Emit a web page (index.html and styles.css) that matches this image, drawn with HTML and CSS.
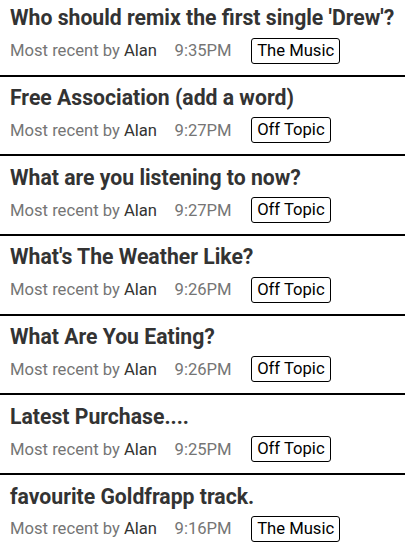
FILE: index.html
```html
<!DOCTYPE html>
<html lang="en">
<head>
    <meta charset="UTF-8">
    <meta name="viewport" content="width=device-width, initial-scale=1.0">
    <title>Discussions</title>
    <link rel="stylesheet" href="styles.css">
</head>
<body>
    <div class="thread">
        <div class="title">Who should remix the first single 'Drew'?</div>
        <div class="meta">
            <span class="recent">Most recent by <span class="who">Alan</span></span>
            <span class="time">9:35PM</span>
            <span class="tag">The Music</span>
        </div>
    </div>
    <div class="thread">
        <div class="title">Free Association (add a word)</div>
        <div class="meta">
            <span class="recent">Most recent by <span class="who">Alan</span></span>
            <span class="time">9:27PM</span>
            <span class="tag">Off Topic</span>
        </div>
    </div>
    <div class="thread">
        <div class="title">What are you listening to now?</div>
        <div class="meta">
            <span class="recent">Most recent by <span class="who">Alan</span></span>
            <span class="time">9:27PM</span>
            <span class="tag">Off Topic</span>
        </div>
    </div>
    <div class="thread">
        <div class="title">What's The Weather Like?</div>
        <div class="meta">
            <span class="recent">Most recent by <span class="who">Alan</span></span>
            <span class="time">9:26PM</span>
            <span class="tag">Off Topic</span>
        </div>
    </div>
    <div class="thread">
        <div class="title">What Are You Eating?</div>
        <div class="meta">
            <span class="recent">Most recent by <span class="who">Alan</span></span>
            <span class="time">9:26PM</span>
            <span class="tag">Off Topic</span>
        </div>
    </div>
    <div class="thread">
        <div class="title">Latest Purchase....</div>
        <div class="meta">
            <span class="recent">Most recent by <span class="who">Alan</span></span>
            <span class="time">9:25PM</span>
            <span class="tag">Off Topic</span>
        </div>
    </div>
    <div class="thread">
        <div class="title">favourite Goldfrapp track.</div>
        <div class="meta">
            <span class="recent">Most recent by <span class="who">Alan</span></span>
            <span class="time">9:16PM</span>
            <span class="tag">The Music</span>
        </div>
    </div>
</body>
</html>
```

FILE: styles.css
```css
body {
    font-family: Roboto, "Liberation Sans", Arial, sans-serif;
    margin: 0;
    padding: 0;
    background: #fff;
}
.thread {
    padding: 8.4px 10px 11px 10px;
    border-bottom: 2px solid #000;
}
.thread:first-child {
    padding-top: 5.4px;
}
.title {
    font-size: 21.2px;
    font-weight: bold;
    color: #333;
    line-height: 25px;
    white-space: nowrap;
}
.meta {
    display: flex;
    align-items: center;
    margin-top: 7.3px;
    font-size: 16.64px;
    color: #757575;
}
.who {
    color: #333;
}
.time {
    margin-left: 17.5px;
}
.tag {
    margin-left: 19.5px;
    color: #000;
    border: 1px solid #000;
    border-radius: 3px;
    padding: 2px 5px;
    line-height: 20px;
}
```
